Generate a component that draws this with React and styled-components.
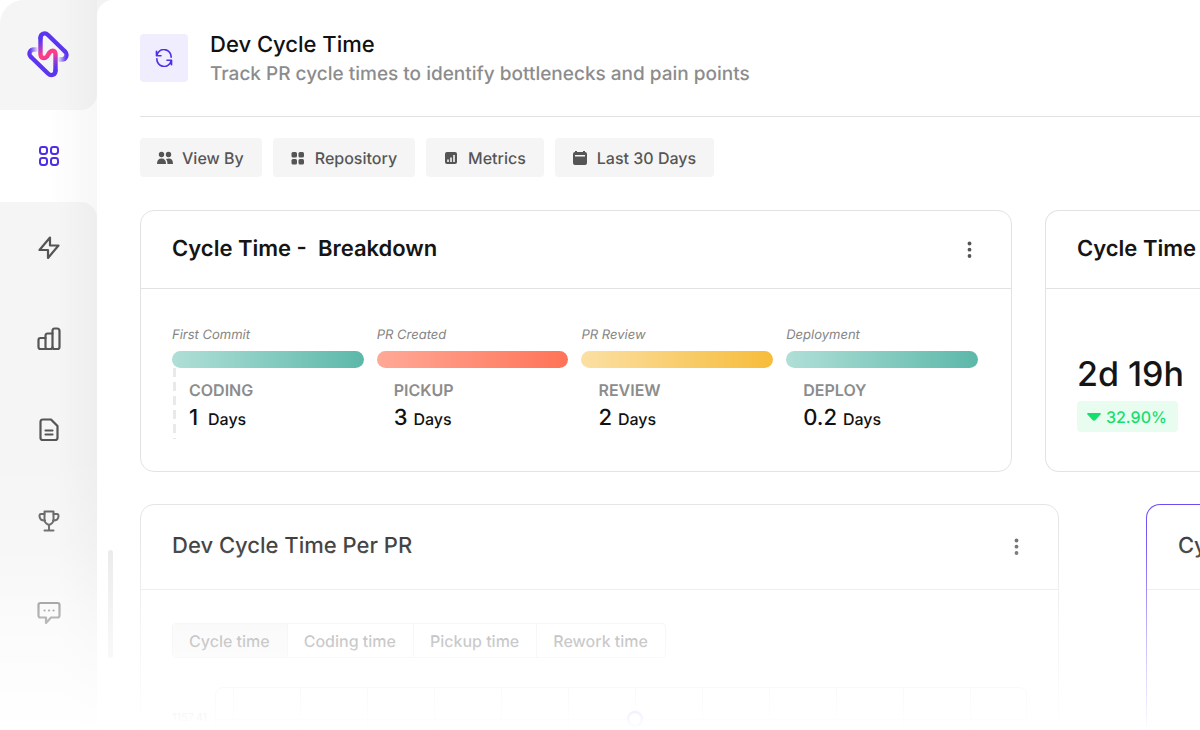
import React from 'react';
import styled, { createGlobalStyle, css } from 'styled-components';

const stages = [
  { event: 'First Commit', name: 'CODING', value: '1', from: '#b0dfd7', to: '#5cb8aa', marked: true },
  { event: 'PR Created', name: 'PICKUP', value: '3', from: '#ffa997', to: '#ff7357' },
  { event: 'PR Review', name: 'REVIEW', value: '2', from: '#fbe0a4', to: '#f7bc3a' },
  { event: 'Deployment', name: 'DEPLOY', value: '0.2', from: '#b0dfd7', to: '#5cb8aa' },
];

const tabs = ['Cycle time', 'Coding time', 'Pickup time', 'Rework time'];

const LogoIcon = () => (
  <svg width="42" height="48" viewBox="0 0 42 48" fill="none" strokeWidth="4.4" strokeLinecap="round" strokeLinejoin="round">
    <defs>
      <linearGradient id="bolt" gradientUnits="userSpaceOnUse" x1="14" y1="6" x2="28" y2="42">
        <stop offset="0.1" stopColor="#5b35f0" />
        <stop offset="0.32" stopColor="#b43cc8" />
        <stop offset="0.46" stopColor="#ff3d86" />
        <stop offset="0.54" stopColor="#ff3d86" />
        <stop offset="0.68" stopColor="#b43cc8" />
        <stop offset="0.9" stopColor="#5b35f0" />
      </linearGradient>
      <linearGradient id="fadeLeft" gradientUnits="userSpaceOnUse" x1="3" y1="0" x2="11" y2="0">
        <stop offset="0" stopColor="#5b35f0" />
        <stop offset="1" stopColor="#5b35f0" stopOpacity="0.05" />
      </linearGradient>
      <linearGradient id="fadeRight" gradientUnits="userSpaceOnUse" x1="39" y1="0" x2="31" y2="0">
        <stop offset="0" stopColor="#5b35f0" />
        <stop offset="1" stopColor="#5b35f0" stopOpacity="0.05" />
      </linearGradient>
    </defs>
    <path d="M10 19.500H7C3 19.500 1 24 4 27" stroke="url(#fadeLeft)" />
    <path d="M32 29.500H35C39 29.500 41 24.500 38 21.500" stroke="url(#fadeRight)" />
    <path d="M38 21.500L21 5C18 2 13.500 3.500 13.500 8" stroke="#5b35f0" />
    <path d="M4 27L21 43.500C24 46.500 28.500 45 28.500 40.500" stroke="#5b35f0" />
    <path d="M13.500 8V24C13.500 28.500 17.500 29 20 26.500L22.500 22.500C25 19.500 28.500 20.500 28.500 24.500V40.500" stroke="url(#bolt)" />
  </svg>
);

const StrokeIcon = ({ size = 24, width = 2.2, children }) => (
  <svg
    width={size}
    height={size}
    viewBox="0 0 24 24"
    fill="none"
    stroke="currentColor"
    strokeWidth={width}
    strokeLinecap="round"
    strokeLinejoin="round"
    aria-hidden="true"
  >
    {children}
  </svg>
);

const GridIcon = () => (
  <StrokeIcon width={2}>
    <rect x="3" y="3" width="7" height="7" rx="2.400" />
    <rect x="14" y="3" width="7" height="7" rx="2.400" />
    <rect x="3" y="14" width="7" height="7" rx="2.400" />
    <rect x="14" y="14" width="7" height="7" rx="2.400" />
  </StrokeIcon>
);

const BoltIcon = () => (
  <StrokeIcon>
    <path d="M13 1.500L2.500 14H11V22L21.500 9.500H13Z" />
  </StrokeIcon>
);

const BarsIcon = () => (
  <StrokeIcon>
    <path d="M8.500 22H3.500Q1.500 22 1.500 20V13Q1.500 11 3.500 11H8.500" />
    <path d="M8.500 20V9Q8.500 6.500 10.500 6.500H15.500M8.500 20Q8.500 22 10.500 22H13.500Q15.500 22 15.500 20" />
    <path d="M15.500 20V4Q15.500 1.500 17.500 1.500H20Q22.500 1.500 22.500 4V20Q22.500 22 20.500 22H17.500Q15.500 22 15.500 20Z" />
  </StrokeIcon>
);

const DocumentIcon = () => (
  <StrokeIcon>
    <path d="M14 1.500H6Q3.500 1.500 3.500 4V20Q3.500 22 6 22H18Q20.500 22 20.500 20V8Z" />
    <path d="M8.500 12.500H15.500M8.500 16.500H15.500" />
  </StrokeIcon>
);

const TrophyIcon = () => (
  <StrokeIcon width={2}>
    <path d="M7.500 2.500H16.500V11Q16.500 14 12 16Q7.500 14 7.500 11Z" />
    <path d="M7.500 5H4Q2.500 5 2.500 7Q2.500 11.500 8 11.500M16.500 5H20Q21.500 5 21.500 7Q21.500 11.500 16 11.500" />
    <path d="M12 16V21.500M7.500 21.500H16.500" />
  </StrokeIcon>
);

const ChatIcon = () => (
  <StrokeIcon>
    <path d="M3.500 3H20.500Q22.500 3 22.500 5V15.500Q22.500 17.500 20.500 17.500H14L9 23V17.500H3.500Q1.500 17.500 1.500 15.500V5Q1.500 3 3.500 3Z" />
    <path d="M7.500 10.500H7.600M12 10.500H12.100M16.500 10.500H16.600" />
  </StrokeIcon>
);

const SyncIcon = () => (
  <StrokeIcon size={18}>
    <path d="M2 3V9H8M2.500 8.500A9.600 9.600 0 0 1 21.500 11" />
    <path d="M22 21V15H16M21.500 15.500A9.600 9.600 0 0 1 2.500 13" />
  </StrokeIcon>
);

const PeopleIcon = () => (
  <svg width="16" height="16" viewBox="0 0 16 16" fill="currentColor" aria-hidden="true">
    <circle cx="4.500" cy="4.500" r="2.700" />
    <circle cx="11.500" cy="4.500" r="2.700" />
    <path d="M0 14Q0 8.500 4.500 8.500Q9 8.500 9 14Z" />
    <path d="M10.500 14Q10.500 10.500 9 9Q16 7 16 14Z" />
  </svg>
);

const TilesIcon = () => (
  <svg width="16" height="16" viewBox="0 0 16 16" fill="currentColor" aria-hidden="true">
    <rect x="1.500" y="2" width="5.500" height="5.500" rx="1.500" />
    <rect x="8.500" y="2" width="5.500" height="5.500" rx="1.500" />
    <rect x="1.500" y="9" width="5.500" height="5.500" rx="1.500" />
    <rect x="8.500" y="9" width="5.500" height="5.500" rx="1.500" />
  </svg>
);

const MetricsIcon = () => (
  <svg width="16" height="16" viewBox="0 0 16 16" aria-hidden="true">
    <rect x="2" y="2" width="12" height="12" rx="2" fill="currentColor" />
    <path d="M5 12V9.500M8 12V7.500M11 12V5" stroke="#f5f5f5" strokeWidth="1.600" />
  </svg>
);

const CalendarIcon = () => (
  <svg width="16" height="16" viewBox="0 0 16 16" fill="currentColor" aria-hidden="true">
    <path d="M3 1H5V2H11V1H13V2Q15 2 15 4V5H1V4Q1 2 3 2Z" />
    <path d="M1 6.500H15V13Q15 15 13 15H3Q1 15 1 13Z" />
    <path d="M1 4H3V8H1ZM13 4H15V8H13Z" />
  </svg>
);

const DotsIcon = () => (
  <svg width="20" height="20" viewBox="0 0 20 20" fill="currentColor" aria-hidden="true">
    <circle cx="10.500" cy="3.500" r="1.900" />
    <circle cx="10.500" cy="9.700" r="1.900" />
    <circle cx="10.500" cy="16" r="1.900" />
  </svg>
);

const ChartGrid = () => (
  <svg width="100%" height="80" aria-hidden="true">
    <defs>
      <pattern id="chartColumns" x="17" width="67" height="80" patternUnits="userSpaceOnUse">
        <path d="M0.500 0V80" stroke="#dcdce0" />
      </pattern>
    </defs>
    <rect width="100%" height="80" fill="url(#chartColumns)" />
    <path d="M0 31.500H900" stroke="#dcdce0" />
    <circle cx="419" cy="31" r="7" fill="#fff" stroke="#6a48ff" strokeWidth="2.500" />
  </svg>
);

const navItems = [
  { label: 'Bolt', Icon: BoltIcon },
  { label: 'Reports', Icon: BarsIcon },
  { label: 'Documents', Icon: DocumentIcon },
  { label: 'Awards', Icon: TrophyIcon },
  { label: 'Messages', Icon: ChatIcon },
];

const filters = [
  { label: 'View By', Icon: PeopleIcon },
  { label: 'Repository', Icon: TilesIcon },
  { label: 'Metrics', Icon: MetricsIcon },
  { label: 'Last 30 Days', Icon: CalendarIcon },
];

const App = () => (
  <Page>
    <GlobalStyle />
    <Sidebar>
      <LogoLink href="#home" aria-label="Home">
        <LogoIcon />
      </LogoLink>
      <NavLink href="#dashboard" aria-label="Dashboard" $active>
        <GridIcon />
      </NavLink>
      <NavGroup>
        {navItems.map(({ label, Icon }) => (
          <NavLink key={label} href={`#${label.toLowerCase()}`} aria-label={label}>
            <Icon />
          </NavLink>
        ))}
      </NavGroup>
    </Sidebar>
    <Main>
      <Header>
        <HeaderIcon>
          <SyncIcon />
        </HeaderIcon>
        <div>
          <Title>Dev Cycle Time</Title>
          <Subtitle>Track PR cycle times to identify bottlenecks and pain points</Subtitle>
        </div>
      </Header>
      <Filters>
        {filters.map(({ label, Icon }) => (
          <FilterButton key={label} type="button">
            <Icon />
            {label}
          </FilterButton>
        ))}
      </Filters>
      <SummaryRow>
        <Card>
          <CardHeader>
            <CardTitle>Cycle Time -&nbsp; Breakdown</CardTitle>
            <MenuButton type="button" aria-label="Breakdown options">
              <DotsIcon />
            </MenuButton>
          </CardHeader>
          <Stages>
            {stages.map(stage => (
              <li key={stage.name}>
                <StageEvent>{stage.event}</StageEvent>
                <StageBar $from={stage.from} $to={stage.to} />
                <StageDetails $marked={stage.marked}>
                  <StageName>{stage.name}</StageName>
                  <StageValue $marked={stage.marked}>
                    {stage.value} <small>Days</small>
                  </StageValue>
                </StageDetails>
              </li>
            ))}
          </Stages>
        </Card>
        <Card $open>
          <CardHeader>
            <CardTitle>Cycle Time</CardTitle>
          </CardHeader>
          <Stat>
            <StatValue>2d 19h</StatValue>
            <Trend>
              <svg width="14" height="8" viewBox="0 0 14 8" fill="currentColor" aria-hidden="true">
                <path d="M1 0H13Q14.500 0 13.500 1.500L8.500 7Q7 8.500 5.500 7L0.500 1.500Q-0.500 0 1 0Z" />
              </svg>
              32.90%
            </Trend>
          </Stat>
        </Card>
      </SummaryRow>
      <DetailRow>
        <Card>
          <CardHeader $tall>
            <CardTitle $light>Dev Cycle Time Per PR</CardTitle>
            <MenuButton type="button" aria-label="Per PR options">
              <DotsIcon />
            </MenuButton>
          </CardHeader>
          <Tabs>
            {tabs.map((tab, i) => (
              <Tab key={tab} type="button" $active={i === 0}>
                {tab}
              </Tab>
            ))}
          </Tabs>
          <Chart>
            <AxisLabel>1157.41</AxisLabel>
            <Plot>
              <ChartGrid />
            </Plot>
          </Chart>
        </Card>
        <Card $open $accent>
          <CardHeader $tall>
            <CardTitle $light>Cycle</CardTitle>
          </CardHeader>
        </Card>
      </DetailRow>
      <ScrollThumb />
    </Main>
    <BottomFade />
  </Page>
);

export default App;

const GlobalStyle = createGlobalStyle`
  * {
    box-sizing: border-box;
  }

  body {
    margin: 0;
    background: #fff;
    font-family: Inter, 'Liberation Sans', sans-serif;
    text-rendering: geometricPrecision;
  }

  h1, h2, p, ul {
    margin: 0;
    padding: 0;
  }

  button {
    border: 0;
    font-family: inherit;
    text-rendering: inherit;
    cursor: pointer;
  }
`;

const sidebarShade = css`
  background: linear-gradient(90deg, #f5f5f5 60%, #eeeeee);
`;

const Page = styled.div`
  display: flex;
  height: 100vh;
  overflow: hidden;
  position: relative;
  border-top-left-radius: 24px;
  background: #f3f3f3;
`;

const Sidebar = styled.nav`
  flex: 0 0 97px;
  display: flex;
  flex-direction: column;
  background: linear-gradient(90deg, #fff 50%, #f7f7f7);
  border-top-left-radius: 24px;
  overflow: hidden;
`;

const LogoLink = styled.a`
  ${sidebarShade};
  display: flex;
  align-items: center;
  justify-content: center;
  flex: 0 0 110px;
  padding: 0 1px 2px 0;
  border-bottom-right-radius: 16px;
`;

const NavLink = styled.a`
  display: flex;
  align-items: center;
  justify-content: center;
  flex: 0 0 ${props => (props.$active ? 92 : 91)}px;
  color: ${props => (props.$active ? '#4f2ee8' : '#555')};
`;

const NavGroup = styled.div`
  ${sidebarShade};
  display: flex;
  flex-direction: column;
  flex: 1;
  border-top-right-radius: 16px;
`;

const Main = styled.main`
  position: relative;
  flex: 1;
  min-width: 0;
  padding-left: 43px;
  background: #fff;
  border-top-left-radius: 16px;
`;

const Header = styled.header`
  display: flex;
  gap: 22px;
  height: 117px;
  padding-top: 34px;
  border-bottom: 1px solid #e2e2e2;
`;

const HeaderIcon = styled.span`
  display: flex;
  align-items: center;
  justify-content: center;
  width: 48px;
  height: 48px;
  border-radius: 4px;
  background: #f0edff;
  color: #4f2ee8;
`;

const Title = styled.h1`
  color: #111;
  font-size: 22px;
  font-weight: 500;
  line-height: 22px;
`;

const Subtitle = styled.p`
  margin-top: 6px;
  color: #8c8c8c;
  font-size: 19px;
  font-weight: 500;
  line-height: 24px;
  white-space: nowrap;
`;

const Filters = styled.div`
  display: flex;
  gap: 11px;
  margin-top: 21px;
`;

const FilterButton = styled.button`
  display: flex;
  align-items: center;
  gap: 9px;
  height: 39px;
  padding: 0 18px 0 17px;
  border-radius: 4px;
  background: #f5f5f5;
  color: #555;
  font-size: 16px;
  font-weight: 500;
  white-space: nowrap;
`;

const SummaryRow = styled.section`
  display: grid;
  grid-template-columns: minmax(0, 45fr) minmax(0, 8fr);
  gap: 33px;
  margin-top: 33px;
`;

const DetailRow = styled.section`
  display: grid;
  grid-template-columns: minmax(0, 17fr) minmax(0, 1fr);
  gap: 87px;
  margin-top: 32px;
`;

const Card = styled.article`
  overflow: hidden;
  border: 1px solid ${props => (props.$accent ? '#5b35f0' : '#e2e2e2')};
  border-radius: 14px;

  ${props =>
    props.$open &&
    css`
      border-right: 0;
      border-top-right-radius: 0;
      border-bottom-right-radius: 0;
    `};
`;

const CardHeader = styled.header`
  display: flex;
  align-items: center;
  justify-content: space-between;
  height: ${props => (props.$tall ? 85 : 78)}px;
  padding: 0 32px 0 31px;
  border-bottom: 1px solid #e2e2e2;
`;

const CardTitle = styled.h2`
  padding-bottom: 2px;
  color: #151515;
  font-size: 22px;
  font-weight: ${props => (props.$light ? 500 : 600)};
  line-height: 28px;
  white-space: nowrap;
`;

const MenuButton = styled.button`
  display: flex;
  padding: 0;
  background: none;
  color: #555;
`;

const Stages = styled.ul`
  display: grid;
  grid-template-columns: repeat(4, minmax(0, 1fr));
  gap: 13px;
  padding: 36px 33px 32px 31px;
  list-style: none;
`;

const StageEvent = styled.p`
  color: #858585;
  font-size: 13px;
  font-style: italic;
  line-height: 20px;
`;

const StageBar = styled.div`
  height: 17px;
  margin-top: 6px;
  border-radius: 9px;
  background: linear-gradient(90deg, ${props => props.$from}, ${props => props.$to});
`;

const StageDetails = styled.div`
  height: 71px;
  padding: 10px 0 0 17px;

  ${props =>
    props.$marked &&
    css`
      background: repeating-linear-gradient(#e9e9e9 0 9px, transparent 9px 14px) 1px 0 / 3px 100% no-repeat;
    `};
`;

const StageName = styled.p`
  color: #8c8c8c;
  font-size: 16px;
  font-weight: 600;
  line-height: 24px;
`;

const StageValue = styled.p`
  margin-top: 4px;
  color: #111;
  font-size: 22px;
  font-weight: 500;
  line-height: 24px;

  small {
    margin-left: ${props => (props.$marked ? 4 : 0)}px;
    font-size: 16px;
  }
`;

const Stat = styled.div`
  padding: 66px 0 0 31px;
  white-space: nowrap;
`;

const StatValue = styled.p`
  color: #151515;
  font-size: 34px;
  font-weight: 500;
  line-height: 40px;
`;

const Trend = styled.p`
  display: inline-flex;
  align-items: center;
  gap: 5px;
  height: 31px;
  margin-top: 6px;
  padding: 0 11px 0 10px;
  border-radius: 4px;
  background: #e8fdf0;
  color: #16de6c;
  font-size: 16px;
  font-weight: 500;
`;

const Tabs = styled.div`
  display: inline-flex;
  margin: 33px 0 0 31px;
  border: 1px solid #e8e8e8;
  border-radius: 4px;
`;

const Tab = styled.button`
  height: 33px;
  padding: 0 17px 0 16px;
  background: ${props => (props.$active ? '#f3f3f3' : 'none')};
  color: #555;
  font-size: 16px;
  font-weight: 500;

  & + & {
    border-left: 1px solid #e8e8e8;
  }
`;

const Chart = styled.div`
  display: flex;
  gap: 4px;
  margin: 29px 31px 0;
`;

const AxisLabel = styled.span`
  flex: 0 0 39px;
  padding-top: 22px;
  color: #777;
  font-size: 11px;
  line-height: 16px;
`;

const Plot = styled.div`
  flex: 1;
  min-width: 0;
  border: 1px solid #dcdce0;
  border-radius: 8px 8px 0 0;
`;

/* Floats in the gutter beside the cards */
const ScrollThumb = styled.div`
  position: absolute;
  top: 550px;
  left: 11px;
  width: 5px;
  height: 108px;
  border-radius: 3px;
  background: #e6e6e6;
`;

const BottomFade = styled.div`
  position: absolute;
  right: 0;
  bottom: 0;
  left: 0;
  height: 280px;
  background: linear-gradient(
    transparent,
    rgba(255, 255, 255, 0.2) 34%,
    rgba(255, 255, 255, 0.54) 58%,
    rgba(255, 255, 255, 0.68) 68%,
    rgba(255, 255, 255, 0.93) 94%,
    #fff
  );
  pointer-events: none;
`;
